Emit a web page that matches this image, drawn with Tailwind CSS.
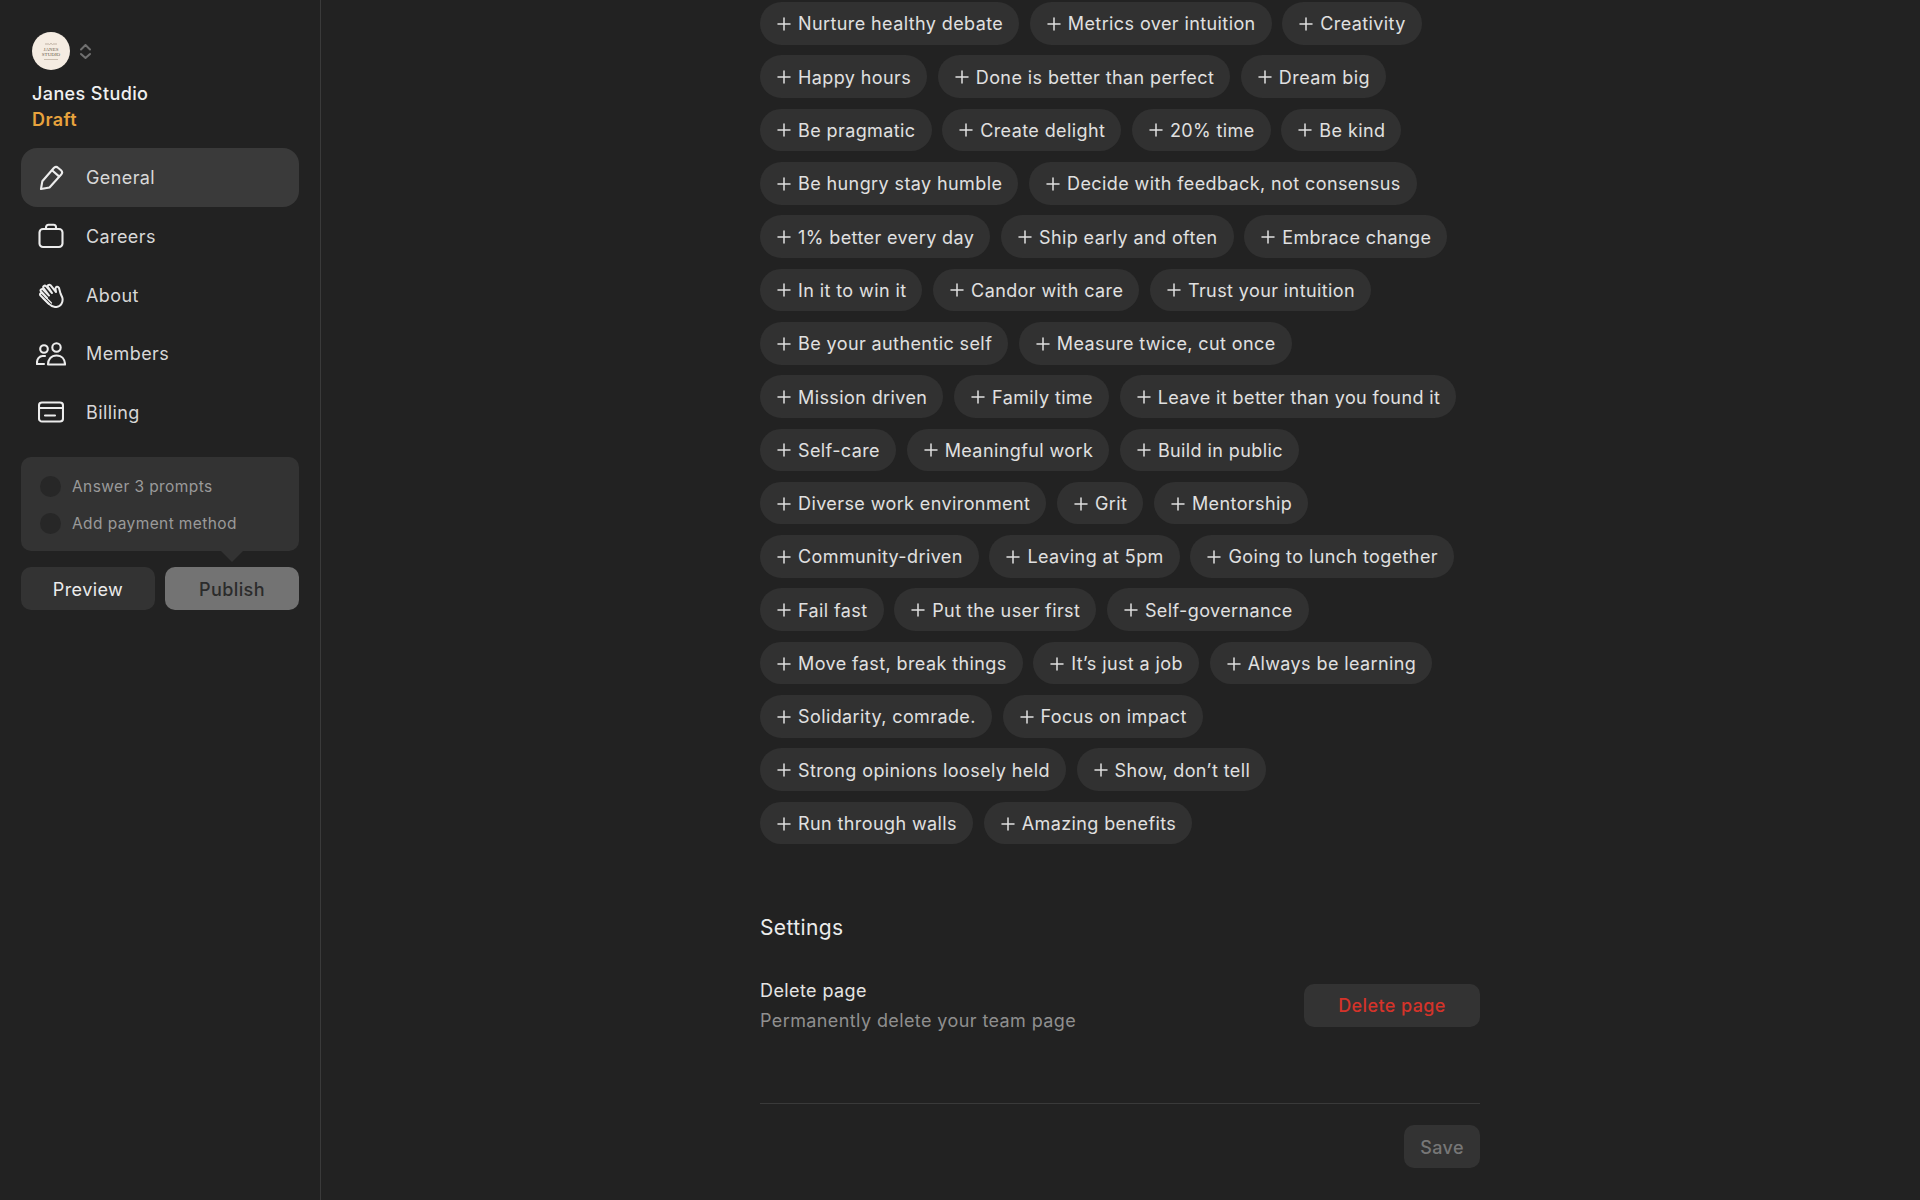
<!DOCTYPE html>
<html lang="en">
<head>
    <meta charset="UTF-8">
    <title>Janes Studio</title>
    <script src="https://cdn.jsdelivr.net/npm/@tailwindcss/browser@4"></script>
</head>
<body class="bg-[#222222] h-[1200px] overflow-hidden font-['Inter',sans-serif] tracking-[0.4px] text-[#e4e4e4]">
    <div class="flex h-[1200px]">
        <!-- Sidebar -->
        <aside class="w-[321px] h-full shrink-0 border-r border-[#3a3a3a] px-[21px] pt-[32px]">
            <div class="flex items-center gap-[10px] pl-[11px]">
                <div class="w-[38px] h-[38px] rounded-full bg-[#f5ece2] flex flex-col items-center justify-center text-[#6b5a4a] text-[5px] leading-[5px] tracking-normal font-['Liberation_Serif',serif]">
                    <svg class="w-[12px] h-[4px] mb-[1px]" viewBox="0 0 12 4" fill="none" stroke="#9a8a78" stroke-width="0.6"><path d="M0 2H4M8 2H12M4.500 3C5 1 7 1 7.500 3"/></svg>
                    <span>JANES</span>
                    <span>STUDIO</span>
                    <span class="w-[14px] h-[1px] mt-[2px] bg-[#c9bcae]"></span>
                </div>
                <svg class="w-[11px] h-[15px] text-[#707070]" viewBox="0 0 11 15" fill="none" stroke="currentColor" stroke-width="2" stroke-linecap="round" stroke-linejoin="round"><path d="M1 5.500 5.500 1 10 5.500M1 10 5.500 14 10 10"/></svg>
            </div>
            <div class="pl-[11px] mt-[11px] text-[18px] leading-[26px] font-medium text-[#f0f0f0]">Janes Studio</div>
            <div class="pl-[11px] text-[18px] leading-[26px] font-semibold text-[#e8a33d]">Draft</div>

            <!-- Nav -->
            <nav class="mt-[15px] flex flex-col text-[18px] text-[#d8d8d8]">
                <a class="h-[58.67px] pt-[1px] flex items-center gap-[22px] pl-[17px] rounded-[16px] bg-[#3a3a3a]">
                    <svg class="w-[26px] h-[26px] text-[#ececec]" viewBox="0 0 26 26" fill="none" stroke="currentColor" stroke-width="2.100" stroke-linecap="round" stroke-linejoin="round"><path d="M3 24 4.300 16.300 15.800 3C17 1.700 18.700 1.500 20 2.700L23 5.300C24.300 6.500 24.400 8.200 23.200 9.500L11.500 22.500Z"/><path d="M14.300 5.500 21 11.400"/></svg>
                    <span>General</span>
                </a>
                <a class="h-[58.67px] pt-[1px] flex items-center gap-[22px] pl-[17px]">
                    <svg class="w-[26px] h-[26px] text-[#ececec]" viewBox="0 0 26 26" fill="none" stroke="currentColor" stroke-width="2.100" stroke-linecap="round" stroke-linejoin="round"><rect x="1.500" y="6" width="23" height="18" rx="3.500"/><path d="M8 6V4.300C8 2.800 9 1.800 10.500 1.800H15.500C17 1.800 18 2.800 18 4.300V6"/></svg>
                    <span>Careers</span>
                </a>
                <a class="h-[58.67px] pt-[1px] flex items-center gap-[22px] pl-[17px]">
                    <svg class="w-[26px] h-[26px] text-[#ececec]" viewBox="0 0 26 26" fill="none" stroke="currentColor" stroke-width="2" stroke-linecap="round" stroke-linejoin="round"><path d="M22.500 11.500 24.300 15.500C25.500 20 23 24.500 18.500 25 15 25.400 12.500 23.500 10 21L2.500 13.500C1 12 3 10.300 4.500 11.500L9 16 3 9.500C1.700 8 3.700 6.200 5.200 7.500L11 13.500 5.500 6C4.500 4.500 6.500 2.800 8 4.200L14 11 10 5C9 3.500 11 2 12.500 3.200L18 10 17.500 7C17.300 4.500 20 4 21 6Z"/><path stroke-width="1.200" d="M5 16.500 10.500 22M7 14.500 13.500 21"/></svg>
                    <span>About</span>
                </a>
                <a class="h-[58.67px] pt-[1px] flex items-center gap-[20px] pl-[15px]">
                    <svg class="w-[30px] h-[24px] text-[#ececec]" viewBox="0 0 30 24" fill="none" stroke="currentColor" stroke-width="2.100" stroke-linecap="round" stroke-linejoin="round"><circle cx="8" cy="7" r="3.800"/><circle cx="20.500" cy="5.500" r="4.200"/><path d="M9 14H6.500C3.500 14 1 17 1 20.500V22H8"/><path d="M12 22.500C12 17.500 15 13.500 20.500 13.500 26 13.500 29 17.500 29 22.500Z"/></svg>
                    <span>Members</span>
                </a>
                <a class="h-[58.67px] pt-[1px] flex items-center gap-[22px] pl-[17px]">
                    <svg class="w-[26px] h-[26px] text-[#ececec]" viewBox="0 0 26 26" fill="none" stroke="currentColor" stroke-width="2.100" stroke-linecap="round" stroke-linejoin="round"><rect x="1" y="3.500" width="24" height="19" rx="3"/><path d="M1 9H25M7 16.500H17"/></svg>
                    <span>Billing</span>
                </a>
            </nav>

            <!-- Checklist -->
            <div class="relative mt-[16px] h-[94px] rounded-[10px] bg-[#333333] pl-[19px] pt-[19px] flex flex-col gap-[16px] text-[15.500px] text-[#9a9a9a]">
                <div class="flex items-center gap-[11px] h-[21px]">
                    <span class="w-[21px] h-[21px] rounded-full bg-[#272727]"></span>
                    <span>Answer 3 prompts</span>
                </div>
                <div class="flex items-center gap-[11px] h-[21px]">
                    <span class="w-[21px] h-[21px] rounded-full bg-[#272727]"></span>
                    <span>Add payment method</span>
                </div>
                <span class="absolute left-[200px] top-[94px] w-0 h-0 border-x-[11px] border-x-transparent border-t-[11px] border-t-[#333333]"></span>
            </div>

            <div class="mt-[16px] flex gap-[10px] text-[18px]">
                <button class="flex-1 h-[43px] pt-[1px] rounded-[10px] bg-[#333333] text-[#ececec]">Preview</button>
                <button class="flex-1 h-[43px] pt-[1px] rounded-[10px] bg-[#737373] text-[#2b2b2b] font-medium">Publish</button>
            </div>
        </aside>

        <!-- Main -->
        <main class="flex-1 pl-[439px] pt-[2px]">
            <div class="w-[720px]">
                <div id="chips" class="flex flex-col gap-[10.670px]"></div>

                <h2 class="mt-[69px] text-[21px] leading-[30px] text-[#ececec]">Settings</h2>
                <div class="mt-[33px] flex items-center justify-between">
                    <div>
                        <div class="text-[18px] leading-[30px] text-[#e4e4e4]">Delete page</div>
                        <div class="text-[18px] leading-[30px] text-[#8f8f8f]">Permanently delete your team page</div>
                    </div>
                    <button class="w-[176px] h-[43px] mb-[2px] rounded-[10px] bg-[#333333] text-[#d5332a] text-[18px] font-medium">Delete page</button>
                </div>
                <div class="mt-[67px] border-t border-[#3a3a3a] pt-[21px] flex justify-end">
                    <button class="w-[76px] h-[43px] pt-[1px] rounded-[10px] bg-[#333333] text-[#777777] text-[18px] font-medium">Save</button>
                </div>
            </div>
        </main>
    </div>

    <script>
        const rows = [
            ['Nurture healthy debate', 'Metrics over intuition', 'Creativity'],
            ['Happy hours', 'Done is better than perfect', 'Dream big'],
            ['Be pragmatic', 'Create delight', '20% time', 'Be kind'],
            ['Be hungry stay humble', 'Decide with feedback, not consensus'],
            ['1% better every day', 'Ship early and often', 'Embrace change'],
            ['In it to win it', 'Candor with care', 'Trust your intuition'],
            ['Be your authentic self', 'Measure twice, cut once'],
            ['Mission driven', 'Family time', 'Leave it better than you found it'],
            ['Self-care', 'Meaningful work', 'Build in public'],
            ['Diverse work environment', 'Grit', 'Mentorship'],
            ['Community-driven', 'Leaving at 5pm', 'Going to lunch together'],
            ['Fail fast', 'Put the user first', 'Self-governance'],
            ['Move fast, break things', 'It’s just a job', 'Always be learning'],
            ['Solidarity, comrade.', 'Focus on impact'],
            ['Strong opinions loosely held', 'Show, don’t tell'],
            ['Run through walls', 'Amazing benefits']
        ];

        // Build the chip rows
        const chips = document.getElementById('chips');
        rows.forEach(row => {
            const line = document.createElement('div');
            line.className = 'flex gap-[10.670px]';
            row.forEach(text => {
                const chip = document.createElement('button');
                chip.className = 'h-[42.670px] pt-[1px] flex items-center gap-[7px] pl-[17px] pr-[16px] rounded-full bg-[#313131] text-[18px] text-[#e0e0e0] whitespace-nowrap';
                chip.innerHTML = '<svg class="w-[14px] h-[14px]" viewBox="0 0 14 14" fill="none" stroke="currentColor" stroke-width="1.500" stroke-linecap="round"><path d="M7 1V13M1 7H13"/></svg>';
                chip.append(text);
                line.appendChild(chip);
            });
            chips.appendChild(line);
        });
    </script>
</body>
</html>
